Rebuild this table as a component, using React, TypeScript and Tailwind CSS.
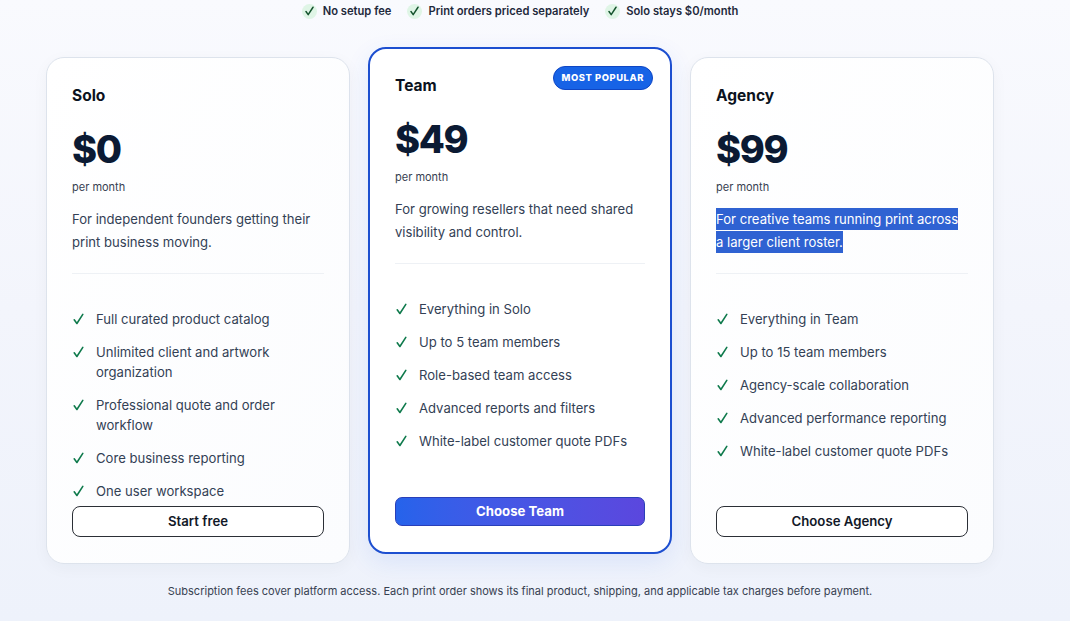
import React from "react";

const font = { fontFamily: "Inter, 'Noto Sans', sans-serif" };

function Check() {
  return (
    <svg width="11" height="12" viewBox="0 0 11 12" className="shrink-0">
      <path d="M1.2 6.8 L3.9 10.5 L9.8 1.4" fill="none" stroke="#0f7a4c" strokeWidth="1.6" strokeLinecap="round" strokeLinejoin="round" />
    </svg>
  );
}

function TopItem({ label }: { label: string }) {
  return (
    <div className="flex items-center gap-[6px]">
      <span className="flex h-[15px] w-[15px] items-center justify-center rounded-full bg-[#dff5e6]">
        <svg width="9" height="10" viewBox="0 0 11 12">
          <path d="M1.2 6.6 L3.9 10.4 L9.8 1.4" fill="none" stroke="#14532d" strokeWidth="1.8" strokeLinecap="round" strokeLinejoin="round" />
        </svg>
      </span>
      <span className="text-[11.2px] font-semibold leading-4 text-[#1e293b]">{label}</span>
    </div>
  );
}

type Plan = {
  name: string;
  price: string;
  desc: React.ReactNode;
  features: string[];
  cta: string;
  featured?: boolean;
};

function Card({ plan }: { plan: Plan }) {
  const featured = plan.featured;
  return (
    <div
      className={
        featured
          ? "relative flex -translate-y-[10px] flex-col rounded-[18px] border-2 border-[#1d4fd0] bg-white px-[25px] pb-[26px] pt-[25px] shadow-[0_8px_24px_rgba(37,99,235,0.10)]"
          : "relative flex flex-col rounded-[18px] border border-[#dde3ec] bg-gradient-to-br from-white to-[#fbfcfe] px-[25px] pb-[26px] pt-[26px] shadow-[0_4px_16px_rgba(30,41,59,0.04)]"
      }
    >
      {featured && (
        <span className="absolute right-[17px] top-[17px] rounded-full border border-[#0f46c4] bg-[#1763e6] px-[8px] py-[5px] text-[9.4px] font-extrabold leading-3 tracking-[0.06em] text-white">
          MOST POPULAR
        </span>
      )}
      <div className="text-[15.5px] font-bold leading-6 text-[#0b1220]">{plan.name}</div>
      <div className="mt-[21px] text-[38px] font-extrabold leading-10 tracking-[-0.035em] text-[#0b1a33]">{plan.price}</div>
      <div className="mt-[10px] text-[11px] leading-4 text-[#374151]">per month</div>
      <div className="mt-[13px] text-[13.1px] leading-[23px] text-[#334155]">{plan.desc}</div>
      <div className="mt-[19px] h-px bg-[#eef1f5]" />
      <ul className="mt-[35px] flex flex-col gap-[13px]">
        {plan.features.map((f) => (
          <li key={f} className="flex items-start gap-[12px] text-[13.1px] leading-5 text-[#334155]">
            <span className="mt-[4px] pl-[1px]"><Check /></span>
            <span>{f}</span>
          </li>
        ))}
      </ul>
      <div className="mt-auto pt-[5px]">
        {featured ? (
          <button className="flex h-[29px] w-full items-center justify-center rounded-[7px] border border-[#2a3fb8] bg-gradient-to-r from-[#2563eb] to-[#5b47de] text-[13.2px] font-bold text-white">
            {plan.cta}
          </button>
        ) : (
          <button className="flex h-[31px] w-full items-center justify-center rounded-[8px] border border-[#2b2f36] bg-white text-[13.2px] font-semibold text-[#111827]">
            {plan.cta}
          </button>
        )}
      </div>
    </div>
  );
}

export default function App() {
  const plans: Plan[] = [
    {
      name: "Solo",
      price: "$0",
      desc: "For independent founders getting their print business moving.",
      features: [
        "Full curated product catalog",
        "Unlimited client and artwork organization",
        "Professional quote and order workflow",
        "Core business reporting",
        "One user workspace",
      ],
      cta: "Start free",
    },
    {
      name: "Team",
      price: "$49",
      desc: "For growing resellers that need shared visibility and control.",
      features: [
        "Everything in Solo",
        "Up to 5 team members",
        "Role-based team access",
        "Advanced reports and filters",
        "White-label customer quote PDFs",
      ],
      cta: "Choose Team",
      featured: true,
    },
    {
      name: "Agency",
      price: "$99",
      desc: (
        <span className="bg-[#2f62d2] py-[3px] text-white [box-decoration-break:clone]">
          For creative teams running print across a larger client roster.
        </span>
      ),
      features: [
        "Everything in Team",
        "Up to 15 team members",
        "Agency-scale collaboration",
        "Advanced performance reporting",
        "White-label customer quote PDFs",
      ],
      cta: "Choose Agency",
    },
  ];

  return (
    <div style={font} className="h-[621px] w-[1070px] overflow-hidden bg-gradient-to-b from-[#f9fafe] via-[#f3f5fc] to-[#eef2fb]">
      <div className="flex w-[1040px] flex-col items-center pt-[3px]">
        <div className="flex items-center gap-[16px]">
          <TopItem label="No setup fee" />
          <TopItem label="Print orders priced separately" />
          <TopItem label="Solo stays $0/month" />
        </div>
        <div className="mt-[38px] grid w-[948px] grid-cols-3 gap-[18px]">
          {plans.map((p) => (
            <Card key={p.name} plan={p} />
          ))}
        </div>
        <p className="mt-[19px] text-[11px] leading-4 text-[#374151]">
          Subscription fees cover platform access. Each print order shows its final product, shipping, and applicable tax charges before payment.
        </p>
      </div>
    </div>
  );
}
